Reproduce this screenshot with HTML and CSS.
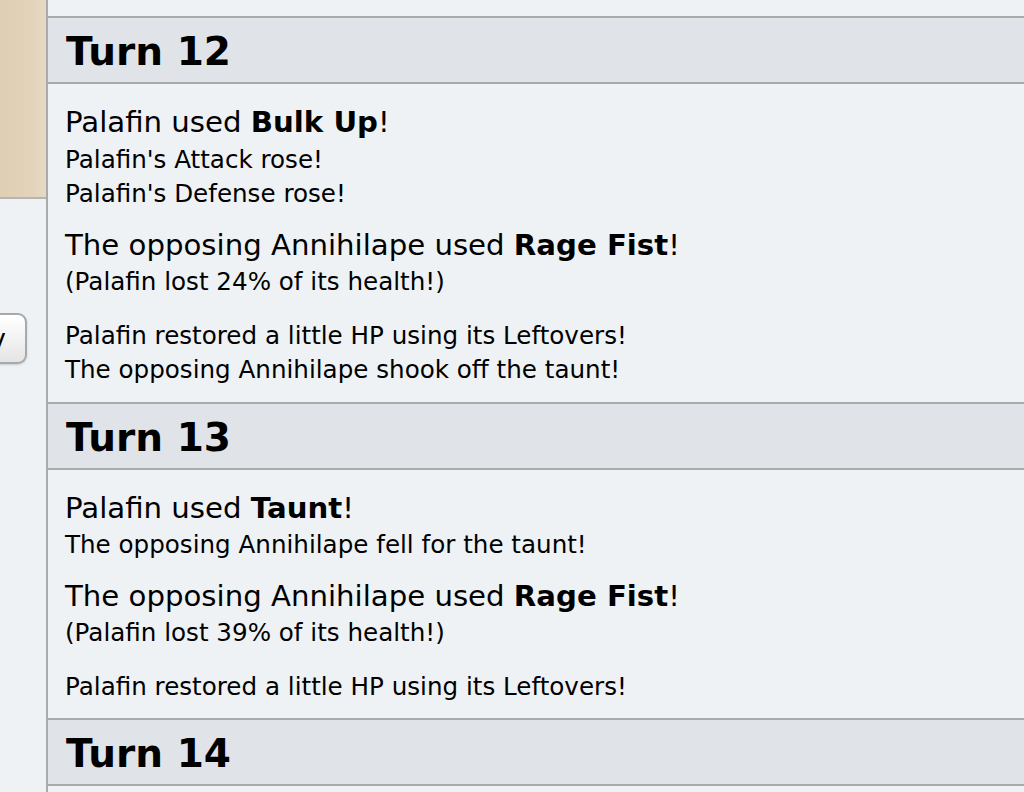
FILE: index.html
```html
<!DOCTYPE html>
<html lang="en">
<head>
<meta charset="utf-8">
<title>Battle log</title>
<link rel="stylesheet" href="styles.css">
</head>
<body>
<div class="app">
  <aside class="side">
    <div class="scene"></div>
    <div class="controls">
      <button class="btn" type="button">Play</button>
    </div>
  </aside>
  <main class="log">
    <h2 class="turn">Turn 12</h2>
    <div class="group">
      <div class="line">Palafin used <strong>Bulk Up</strong>!</div>
      <div class="line"><small>Palafin's Attack rose!</small></div>
      <div class="line"><small>Palafin's Defense rose!</small></div>
    </div>
    <div class="group">
      <div class="line">The opposing Annihilape used <strong>Rage Fist</strong>!</div>
      <div class="line"><small>(Palafin lost 24% of its health!)</small></div>
    </div>
    <div class="group">
      <div class="line"><small>Palafin restored a little HP using its Leftovers!</small></div>
      <div class="line"><small>The opposing Annihilape shook off the taunt!</small></div>
    </div>
    <h2 class="turn">Turn 13</h2>
    <div class="group">
      <div class="line">Palafin used <strong>Taunt</strong>!</div>
      <div class="line"><small>The opposing Annihilape fell for the taunt!</small></div>
    </div>
    <div class="group">
      <div class="line">The opposing Annihilape used <strong>Rage Fist</strong>!</div>
      <div class="line"><small>(Palafin lost 39% of its health!)</small></div>
    </div>
    <div class="group">
      <div class="line"><small>Palafin restored a little HP using its Leftovers!</small></div>
    </div>
    <h2 class="turn">Turn 14</h2>
  </main>
</div>
</body>
</html>
```

FILE: styles.css
```css
* { box-sizing: border-box; }
html, body { margin: 0; height: 100%; overflow: hidden; }
body {
  background: #eef2f5;
  color: #000;
  font-family: "DejaVu Sans", Verdana, sans-serif;
}
.app { display: flex; height: 792px; }
.side {
  width: 48px;
  flex: none;
  border-right: 2px solid #aaaaaa;
  overflow: hidden;
  display: flex;
  flex-direction: column;
}
.scene {
  height: 199px;
  flex: none;
  border-bottom: 2px solid #b5b5b5;
  background: linear-gradient(90deg, #dfcfb4 0%, #e3d3ba 70%, #e7d9c4 100%);
}
.controls { padding-top: 114px; }
.btn {
  display: block;
  width: 92px;
  height: 51px;
  margin-left: -65px;
  padding: 0 19px 0 0;
  text-align: right;
  font-family: "DejaVu Sans", Verdana, sans-serif;
  font-size: 26px;
  color: #000;
  border: 2px solid #a9a9a9;
  border-radius: 9px;
  background: linear-gradient(180deg, #ffffff 0%, #f3f3f3 50%, #e4e4e4 100%);
  box-shadow: 0 1px 2px rgba(0,0,0,0.15);
}
.log {
  flex: 1;
  display: flex;
  flex-direction: column;
  gap: 19px;
  padding-top: 16px;
  font-size: 29.2px;
  line-height: 34.5px;
}
.turn {
  flex: none;
  margin: 0;
  height: 68px;
  padding-left: 18px;
  border-top: 2px solid #aaaaaa;
  border-bottom: 2px solid #aaaaaa;
  background: #e0e4e8;
  font-size: 39px;
  line-height: 67px;
  font-weight: bold;
}
.group { flex: none; }
.line {
  height: 34.5px;
  padding-top: 2px;
  padding-left: 17px;
  white-space: nowrap;
}
.line small { font-size: 24.6px; line-height: 20px; vertical-align: -1px; }
.line strong { font-weight: bold; }
```
